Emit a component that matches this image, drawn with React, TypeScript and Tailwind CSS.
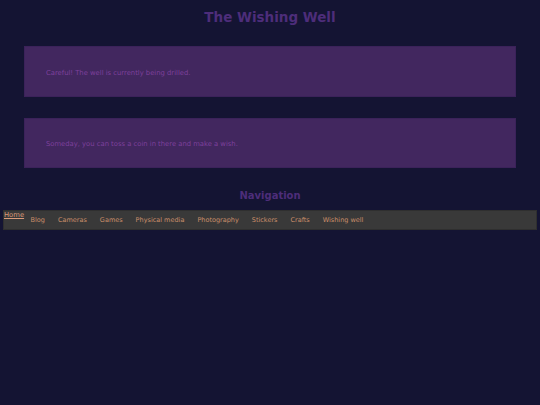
import React from "react";

const links = ["Blog", "Cameras", "Games", "Physical media", "Photography", "Stickers", "Crafts", "Wishing well"];

export default function App() {
  return (
    <div className="min-h-[405px] w-full bg-[#141433] pt-[8px] font-['DejaVu_Sans',sans-serif]">
      <h1 className="text-center text-[13.5px] font-bold leading-[18px] text-[#4d2d7a]">The Wishing Well</h1>
      <div className="mx-[24px] mt-[20px] flex h-[51px] items-center border border-[#3b225a] bg-[#42275f] px-[21px] pt-[3px]">
        <p className="text-[6.8px] text-[#7e409c]">Careful! The well is currently being drilled.</p>
      </div>
      <div className="mx-[24px] mt-[21px] flex h-[50px] items-center border border-[#3b225a] bg-[#42275f] px-[21px] pt-[2px]">
        <p className="text-[6.8px] text-[#7e409c]">Someday, you can toss a coin in there and make a wish.</p>
      </div>
      <h2 className="mt-[20px] text-center text-[10px] font-bold leading-[16px] text-[#4d2d7a]">Navigation</h2>
      <nav className="mx-[3px] mt-[6px] flex h-[20px] items-start border border-[#2f2f2f] bg-[#393939]">
        <a className="text-[6.8px] leading-[9px] text-[#d99a7a] underline">Home</a>
        <ul className="flex items-center pt-[5px]">
          {links.map((l) => (
            <li key={l} className="px-[6.5px] text-[6.5px] leading-[9px] text-[#c98e6a]">{l}</li>
          ))}
        </ul>
      </nav>
    </div>
  );
}
